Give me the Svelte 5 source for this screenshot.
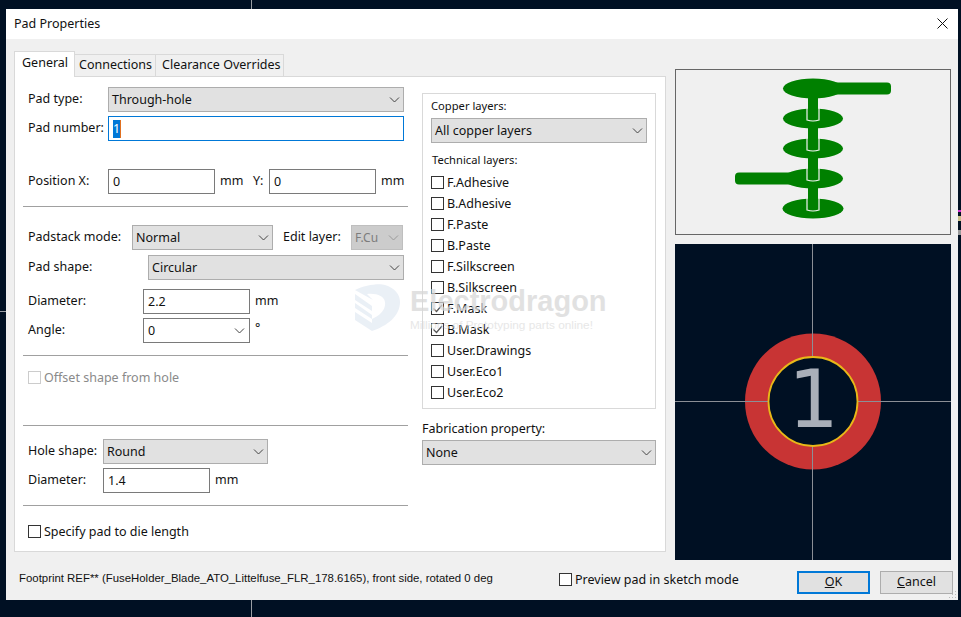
<script>
    let layers = [
        { name: "F.Adhesive", on: false },
        { name: "B.Adhesive", on: false },
        { name: "F.Paste", on: false },
        { name: "B.Paste", on: false },
        { name: "F.Silkscreen", on: false },
        { name: "B.Silkscreen", on: false },
        { name: "F.Mask", on: true },
        { name: "B.Mask", on: true },
        { name: "User.Drawings", on: false },
        { name: "User.Eco1", on: false },
        { name: "User.Eco2", on: false }
    ]
    let stemY = [119, 149, 179, 209]
</script>

{#snippet chevron()}
    <svg class="chev" width="11" height="6" viewBox="0 0 11 6"><path d="M1 .5 5.5 5 10 .5" fill="none" stroke="currentColor" stroke-width="1"/></svg>
{/snippet}

{#snippet check(on, off)}
    <span class="box" class:off>
        {#if on}
            <svg width="11" height="11" viewBox="0 0 11 11"><path d="M1.5 5.5 4.5 8.5 10 2" fill="none" stroke="#555" stroke-width="1.2"/></svg>
        {/if}
    </span>
{/snippet}

<div class="desk">
    <i class="line vtop"></i>
    <i class="line vbot"></i>
    <i class="line hleft"></i>
    <i class="mark m1"></i>
    <i class="mark m2"></i>
    <i class="mark m3"></i>

    <div class="dialog">
        <div class="titlebar">
            <span>Pad Properties</span>
            <svg width="11" height="11" viewBox="0 0 11 11"><path d="M.5.5 10.5 10.5M10.5.5.5 10.5" stroke="#111" stroke-width="1" fill="none"/></svg>
        </div>

        <div class="body">
            <div class="main">
                <div class="notebook">
                    <div class="tabs">
                        <div class="tab active">General</div>
                        <div class="tab t2">Connections</div>
                        <div class="tab t3">Clearance Overrides</div>
                    </div>
                    <div class="panel">
                        <div class="left">
                            <div class="row">
                                <span class="lbl" style="width:80px">Pad type:</span>
                                <div class="select grow">Through-hole{@render chevron()}</div>
                            </div>
                            <div class="row mt4">
                                <span class="lbl" style="width:80px">Pad number:</span>
                                <div class="input grow focus"><span class="sel">1</span><i class="caret"></i></div>
                            </div>
                            <div class="row pos">
                                <span class="lbl" style="width:80px">Position X:</span>
                                <div class="input w107">0</div>
                                <span class="unit">mm</span>
                                <span class="ylbl">Y:</span>
                                <div class="input w107">0</div>
                                <span class="unit">mm</span>
                            </div>
                            <hr class="sep" />
                            <div class="row stack">
                                <span class="lbl" style="width:104px">Padstack mode:</span>
                                <div class="select" style="width:141px">Normal{@render chevron()}</div>
                                <span class="editlbl">Edit layer:</span>
                                <div class="select disabled" style="width:52px">F.Cu{@render chevron()}</div>
                            </div>
                            <div class="row mt5">
                                <span class="lbl" style="width:120px">Pad shape:</span>
                                <div class="select grow">Circular{@render chevron()}</div>
                            </div>
                            <div class="row mt9">
                                <span class="lbl" style="width:115px">Diameter:</span>
                                <div class="input w107">2.2</div>
                                <span class="unit">mm</span>
                            </div>
                            <div class="row mt4">
                                <span class="lbl" style="width:115px">Angle:</span>
                                <div class="input w107 combo">0{@render chevron()}</div>
                                <span class="unit deg">°</span>
                            </div>
                            <hr class="sep" />
                            <div class="checkrow offset">{@render check(false, true)}<span>Offset shape from hole</span></div>
                            <hr class="sep hole-sep" />
                            <div class="row hole">
                                <span class="lbl" style="width:75px">Hole shape:</span>
                                <div class="select" style="width:165px">Round{@render chevron()}</div>
                            </div>
                            <div class="row mt4">
                                <span class="lbl" style="width:75px">Diameter:</span>
                                <div class="input w107">1.4</div>
                                <span class="unit">mm</span>
                            </div>
                            <hr class="sep" />
                            <div class="checkrow die">{@render check(false)}<span>Specify pad to die length</span></div>
                        </div>

                        <div class="right">
                            <div class="layers">
                                <div class="cap">Copper layers:</div>
                                <div class="select">All copper layers{@render chevron()}</div>
                                <div class="cap tech">Technical layers:</div>
                                <div class="list">
                                    {#each layers as l}
                                        <div class="layer">{@render check(l.on)}<span>{l.name}</span></div>
                                    {/each}
                                </div>
                            </div>
                            <div class="fab">Fabrication property:</div>
                            <div class="select">None{@render chevron()}</div>
                        </div>
                    </div>
                </div>

                <div class="views">
                    <svg class="sketch" width="276" height="166" viewBox="675 69 276 166">
                        <rect x="675.5" y="69.5" width="275" height="165" fill="#f0f0f0" stroke="#666"/>
                        <rect x="808" y="90" width="10" height="120" fill="#008000"/>
                        <ellipse cx="813" cy="88.5" rx="30" ry="10" fill="#008000"/>
                        <rect x="830" y="82.5" width="61" height="12" rx="4" fill="#008000"/>
                        <ellipse cx="813" cy="118.5" rx="30" ry="10" fill="#008000"/>
                        <ellipse cx="813" cy="148.5" rx="30" ry="10" fill="#008000"/>
                        <ellipse cx="813" cy="178.5" rx="30" ry="10" fill="#008000"/>
                        <rect x="735" y="172.5" width="60" height="12" rx="4" fill="#008000"/>
                        <ellipse cx="813" cy="208.5" rx="30.5" ry="10" fill="#008000"/>
                        {#each stemY as y}
                            <path d="M808 {y - 21}H818V{y}Q813 {y + 2.5} 808 {y}Z" fill="#008000"/>
                            <path d="M807 {y - 11}V{y + 1}Q813 {y + 3} 819 {y + 1}V{y - 11}" fill="none" stroke="#f4f4f4" stroke-width="1.2"/>
                        {/each}
                    </svg>
                    <svg class="canvas" width="276" height="316" viewBox="675 244 276 316">
                        <rect x="675" y="244" width="276" height="316" fill="#001023"/>
                        <circle cx="813" cy="401.5" r="68" fill="#c83434"/>
                        <path d="M812.5 244V560M675 401.5H951" stroke="#8b8f96" stroke-width="1"/>
                        <circle cx="813" cy="401.5" r="44.5" fill="#001023" stroke="#e8b818" stroke-width="1.8"/>
                        <text class="padnum" x="813.5" y="427" text-anchor="middle">1</text>
                    </svg>
                </div>
            </div>

            <div class="footer">
                <span class="fp">Footprint REF** (FuseHolder_Blade_ATO_Littelfuse_FLR_178.6165), front side, rotated 0 deg</span>
                <div class="checkrow sketchmode">{@render check(false)}<span>Preview pad in sketch mode</span></div>
                <button class="btn default"><u>O</u>K</button>
                <button class="btn"><u>C</u>ancel</button>
            </div>
        </div>
        <svg class="grip" width="9" height="9" viewBox="0 0 9 9"><path d="M7 1h1v1H7zM7 4h1v1H7zM4 4h1v1H4zM7 7h1v1H7zM4 7h1v1H4zM1 7h1v1H1z" fill="#bbb"/></svg>
    </div>

    <div class="wm">
        <svg width="46" height="50" viewBox="0 0 46 50">
            <path d="M0 6C10 1 24-1 30 1 40 4 45 11 45 18 45 32 32 42 17 47V35C26 31 31 25 30 18 29 12 22 9 12 10L18 16Z" fill="#e4ebf4"/>
            <path d="M0 10 17 22V27L0 16ZM0 19 17 31V35L0 24ZM0 28 17 39V47L0 36Z" fill="#e4ebf4"/>
        </svg>
        <div class="wmtext">
            <div class="wmname">Electrodragon</div>
            <div class="wmsub">Millions of Prototyping parts online!</div>
        </div>
    </div>
</div>

<style>
    :global(body) {
        margin: 0;
    }
    .desk {
        position: relative;
        width: 961px;
        height: 617px;
        box-sizing: border-box;
        padding: 9px 3px 17px 6px;
        background: #001023;
        overflow: hidden;
        font-family: "Noto Sans", "Open Sans", sans-serif;
        font-size: 12.5px;
        color: #111;
    }
    .line {
        position: absolute;
        background: #9a9ea4;
    }
    .vtop { left: 251px; top: 0; width: 1px; height: 9px; }
    .vbot { left: 251px; top: 600px; width: 1px; height: 17px; }
    .hleft { left: 0; top: 311px; width: 6px; height: 1px; }
    .mark {
        position: absolute;
        left: 958px;
        width: 3px;
    }
    .m1 { top: 210px; height: 2px; background: #d02fd0; }
    .m2 { top: 216px; height: 5px; background: #c8c08a; }
    .m3 { top: 230px; height: 5px; background: #9a9a9a; }
    .dialog {
        position: relative;
        height: 591px;
        display: flex;
        flex-direction: column;
        background: #f0f0f0;
    }
    .titlebar {
        height: 30px;
        flex: none;
        display: flex;
        align-items: center;
        justify-content: space-between;
        padding: 0 10px 1px 8px;
        box-sizing: border-box;
        background: #fff;
    }
    .body {
        padding: 12px 7px 0 8px;
    }
    .main {
        display: flex;
        gap: 9px;
        height: 509px;
    }
    .notebook {
        width: 652px;
        flex: none;
    }
    .tabs {
        display: flex;
        align-items: flex-end;
        height: 25px;
    }
    .tab {
        height: 22px;
        box-sizing: border-box;
        line-height: 20px;
        white-space: nowrap;
        border: 1px solid #d9d9d9;
        border-bottom: none;
        border-left: none;
        padding: 0 3px 0 6px;
    }
    .tab.active {
        position: relative;
        margin-bottom: -1px;
        height: 26px;
        width: 61px;
        line-height: 21px;
        background: #fff;
        border-left: 1px solid #d9d9d9;
        padding-left: 7px;
    }
    .t2 { width: 81px; padding-left: 4px; }
    .t3 { width: 128px; }
    .panel {
        height: 476px;
        box-sizing: border-box;
        border: 1px solid #d9d9d9;
        background: #fff;
        padding: 10px 9px 0 8px;
        display: flex;
        gap: 14px;
    }
    .left {
        width: 385px;
        flex: none;
    }
    .right {
        width: 234px;
        flex: none;
        margin-top: 6px;
    }
    .row {
        display: flex;
        align-items: center;
        height: 25px;
        padding: 0 4px 0 5px;
    }
    .mt4 { margin-top: 4px; }
    .mt5 { margin-top: 5px; }
    .mt9 { margin-top: 9px; }
    .pos { margin-top: 28px; }
    .stack { margin-top: 18px; }
    .hole { margin-top: 13px; }
    .lbl {
        flex: none;
        margin-bottom: 2px;
    }
    .select, .input {
        position: relative;
        box-sizing: border-box;
        height: 25px;
        line-height: 24px;
        padding-left: 3px;
        flex: none;
    }
    .select {
        background: #e1e1e1;
        border: 1px solid #adadad;
    }
    .grow.select, .grow.input {
        flex: 1;
    }
    .select.disabled {
        background: #ccc;
        border-color: #bfbfbf;
        color: #7c7c7c;
        font-size: 12px;
    }
    .chev {
        position: absolute;
        right: 3px;
        top: 9px;
        color: #444;
    }
    .disabled .chev {
        color: #999;
    }
    .input {
        background: #fff;
        border: 1px solid #7a7a7a;
        padding-left: 4px;
        line-height: 23px;
    }
    .input.focus {
        border-color: #0078d7;
        padding-left: 4px;
        display: flex;
        align-items: center;
    }
    .combo .chev {
        right: 4px;
    }
    .sel {
        background: #0078d7;
        color: #fff;
        width: 7px;
        height: 18px;
        line-height: 18px;
    }
    .caret {
        width: 1px;
        height: 18px;
        background: #e07020;
    }
    .w107 {
        width: 107px;
    }
    .unit {
        margin: 0 0 2px 5px;
        width: 22px;
        flex: none;
    }
    .deg {
        margin-bottom: 6px;
    }
    .ylbl {
        margin: 0 0 2px 11px;
        width: 16px;
        flex: none;
    }
    .editlbl {
        margin: 0 0 2px 10px;
        width: 68px;
        flex: none;
    }
    .sep {
        margin: 12px 0 0;
        border: none;
        height: 1px;
        background: #a0a0a0;
    }
    .hole-sep {
        margin-top: 41px;
    }
    .checkrow, .layer {
        display: flex;
        align-items: center;
        gap: 3px;
    }
    .checkrow {
        height: 13px;
        padding-left: 5px;
    }
    .offset {
        margin-top: 15px;
        color: #8a8a8a;
    }
    .die {
        margin-top: 19px;
    }
    .box {
        width: 13px;
        height: 13px;
        box-sizing: border-box;
        flex: none;
        display: flex;
        background: #fff;
        border: 1px solid #333;
    }
    .box.off {
        border-color: #ccc;
    }
    .layers {
        height: 316px;
        box-sizing: border-box;
        border: 1px solid #d9d9d9;
        padding: 4px 8px 0;
    }
    .cap {
        line-height: 16px;
        font-size: 11.2px;
        margin-bottom: 4px;
    }
    .tech {
        margin: 9px 0 4px 1px;
    }
    .layer {
        height: 21px;
    }
    .layer span {
        margin-bottom: 1px;
    }
    .fab {
        margin-top: 11px;
        line-height: 18px;
        height: 20px;
    }
    .views {
        width: 276px;
        flex: none;
        margin-top: 18px;
        display: flex;
        flex-direction: column;
        gap: 9px;
    }
    .views svg {
        display: block;
    }
    .padnum {
        font-family: "DejaVu Sans", sans-serif;
        font-size: 80px;
        fill: #a9afb9;
    }
    .footer {
        display: flex;
        align-items: center;
        height: 23px;
        margin-top: 11px;
        padding-left: 5px;
    }
    .fp {
        font-family: "Liberation Sans", sans-serif;
        font-size: 11.4px;
        width: 540px;
        flex: none;
        margin-top: -9px;
    }
    .sketchmode {
        width: 238px;
        flex: none;
        padding-left: 0;
        margin-top: -7px;
    }
    .btn {
        width: 73px;
        height: 23px;
        flex: none;
        box-sizing: border-box;
        margin: 0 10px 0 0;
        padding: 0 0 2px;
        background: #e1e1e1;
        border: 1px solid #adadad;
        font: inherit;
        color: inherit;
    }
    .btn.default {
        border: 2px solid #0078d7;
    }
    .grip {
        position: absolute;
        right: 1px;
        bottom: 1px;
    }
    .wm {
        position: absolute;
        left: 355px;
        top: 284px;
        display: flex;
        gap: 9px;
        pointer-events: none;
        opacity: .75;
    }
    .wmtext {
        font-family: "Liberation Sans", sans-serif;
        color: #d8d8d8;
    }
    .wmname {
        font-size: 29px;
        font-weight: bold;
        line-height: 34px;
    }
    .wmsub {
        font-size: 11.8px;
        line-height: 14px;
        color: #e0e0e0;
    }
</style>
